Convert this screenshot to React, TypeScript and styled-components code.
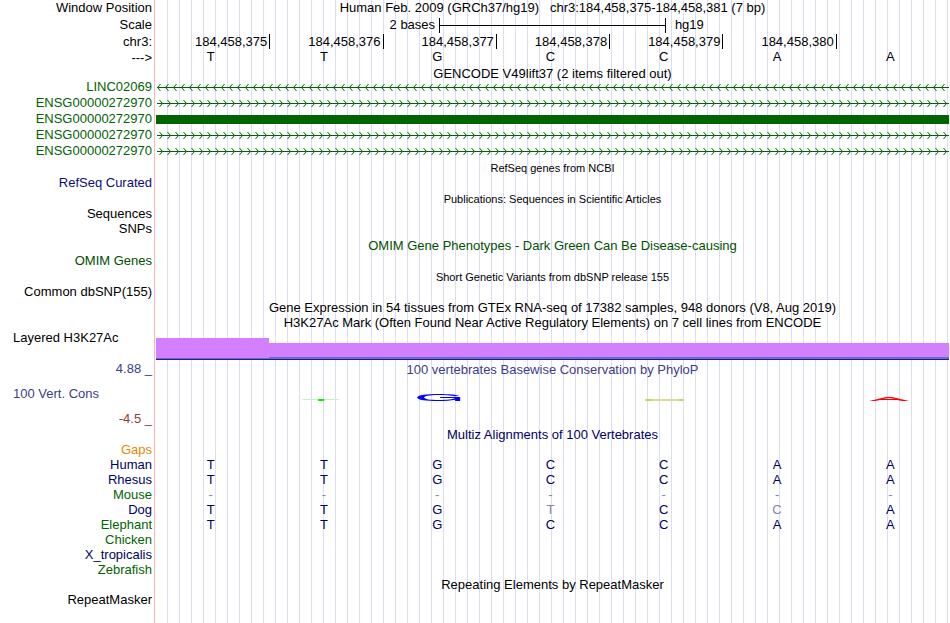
import React from 'react';
import styled, { createGlobalStyle } from 'styled-components';

const LABEL_WIDTH = '156px';

const GlobalStyle = createGlobalStyle`
  body {
    margin: 0;
    background: #fff;
    color: #000;
    font-family: "Liberation Sans", Arial, Helvetica, sans-serif;
    font-size: 13px;
    line-height: 15px;
  }
`;

const Browser = styled.main`
  box-sizing: border-box;
  min-height: 100vh;
  padding-right: 1px;
  overflow: hidden;
  white-space: nowrap;
  background-image: linear-gradient(#ffb4b4, #ffb4b4),
    repeating-linear-gradient(to right, transparent 0 11px, #dcdcf8 11px 12px);
  background-repeat: no-repeat;
  background-size: 1px 100%, 100% 100%;
  background-position: 154px 0, 156px 0;
`;

const Row = styled.div<{ $height: number }>`
  display: grid;
  grid-template-columns: ${LABEL_WIDTH} minmax(0, 1fr);
  height: ${(p) => p.$height}px;
  line-height: ${(p) => p.$height}px;
`;

const Label = styled.div<{ $color?: string; $left?: boolean }>`
  padding: 0 4px 0 13px;
  text-align: ${(p) => (p.$left ? 'left' : 'right')};
  line-height: inherit;
  color: ${(p) => p.$color ?? '#000'};
`;

type Spacing = 'tight' | 'normal' | 'loose';

const titleHeight: Record<Spacing, number> = { tight: 13, normal: 15, loose: 16 };

const Title = styled.h2<{ $color?: string; $small?: boolean; $spacing?: Spacing }>`
  box-sizing: border-box;
  margin: 0 0 0 ${LABEL_WIDTH};
  height: ${(p) => titleHeight[p.$spacing ?? 'normal']}px;
  padding-top: ${(p) => (p.$spacing === 'loose' ? 2 : 0)}px;
  line-height: ${(p) => (p.$spacing === 'loose' ? 14 : 15)}px;
  font-size: ${(p) => (p.$small ? 11 : 13)}px;
  font-weight: 400;
  text-align: center;
  color: ${(p) => p.$color ?? '#000'};
`;

const Heading = styled.h1`
  margin: 0;
  font-size: 13px;
  font-weight: 400;
  line-height: 15px;
  text-align: center;
  white-space: pre;
`;

const ScaleArea = styled.div`
  display: grid;
  grid-template-columns: 1fr 28.6% 1fr;
  align-items: center;
`;

const ScaleUnit = styled.span`
  padding-right: 4px;
  text-align: right;
`;

const Assembly = styled.span`
  padding-left: 9px;
`;

const ScaleBar = styled.div`
  display: flex;
  align-items: center;
  height: 15px;
  border: solid #000;
  border-width: 0 1px;

  &::before {
    content: '';
    flex: 1;
    height: 1px;
    background: #000;
  }
`;

const Columns = styled.div`
  display: grid;
  grid-template-columns: repeat(7, minmax(0, 1fr));
`;

const Position = styled.span<{ $tick: boolean }>`
  height: 15px;
  margin-right: -1px;
  padding-right: 2px;
  text-align: right;
  border-right: 1px solid ${(p) => (p.$tick ? '#000' : 'transparent')};
`;

const Base = styled.span`
  padding-right: 4px;
  line-height: 13px;
  text-align: center;
`;

const Strand = styled.svg`
  display: block;
  width: 100%;
  height: 16px;
`;

const ExonBar = styled.div`
  align-self: center;
  height: 9px;
  background: #006400;
`;

const SignalRow = styled.div`
  display: grid;
  grid-template-columns: ${LABEL_WIDTH} minmax(0, 1fr);
  align-items: end;
  height: 30px;
`;

const SignalLabel = styled(Label)`
  align-self: start;
`;

const Signal = styled.svg`
  display: block;
  width: 100%;
  height: 22px;
`;

const Conservation = styled.section`
  display: grid;
  grid-template-columns: ${LABEL_WIDTH} minmax(0, 1fr);
`;

const ConservationLabels = styled.div`
  display: grid;
  grid-template-rows: 17px 33px 17px;
  align-items: center;
`;

const ConservationTitle = styled.h2`
  margin: 0;
  padding-top: 2px;
  font-size: 13px;
  font-weight: 400;
  line-height: 15px;
  text-align: center;
  color: #3c3c8c;
`;

const Logos = styled(Columns)`
  padding-top: 15px;
`;

const Logo = styled.svg`
  display: block;
  width: 100%;
  height: 16px;
`;

const Alignment = styled.table`
  width: 100%;
  table-layout: fixed;
  border-collapse: collapse;
`;

const Species = styled.th<{ $color: string }>`
  width: 152px;
  height: 15px;
  padding: 0 4px 0 0;
  font-weight: 400;
  text-align: right;
  color: ${(p) => p.$color};
`;

const AlignedBase = styled.td<{ $faded: boolean }>`
  padding: 0 4px 0 0;
  text-align: center;
  color: ${(p) => (p.$faded ? '#8484b0' : '#000064')};
`;

const GREEN = '#006400';
const NAVY = '#000064';

const positions = [
  '184,458,375',
  '184,458,376',
  '184,458,377',
  '184,458,378',
  '184,458,379',
  '184,458,380',
  '',
];

const reference = 'TTGCCAA';

const transcripts: { name: string; kind: 'left' | 'right' | 'exon' }[] = [
  { name: 'LINC02069', kind: 'left' },
  { name: 'ENSG00000272970', kind: 'right' },
  { name: 'ENSG00000272970', kind: 'exon' },
  { name: 'ENSG00000272970', kind: 'right' },
  { name: 'ENSG00000272970', kind: 'right' },
];

const species = [
  { name: 'Gaps', color: '#e68a00', bases: '       ', faded: '' },
  { name: 'Human', color: NAVY, bases: 'TTGCCAA', faded: '' },
  { name: 'Rhesus', color: NAVY, bases: 'TTGCCAA', faded: '' },
  { name: 'Mouse', color: GREEN, bases: '-------', faded: '0123456' },
  { name: 'Dog', color: NAVY, bases: 'TTGTCCA', faded: '35' },
  { name: 'Elephant', color: GREEN, bases: 'TTGCCAA', faded: '' },
  { name: 'Chicken', color: GREEN, bases: '       ', faded: '' },
  { name: 'X_tropicalis', color: NAVY, bases: '       ', faded: '' },
  { name: 'Zebrafish', color: GREEN, bases: '       ', faded: '' },
];

function Intron({ direction, id }: { direction: 'left' | 'right'; id: string }) {
  const chevron = direction === 'left' ? 'M4.5 5L1.5 8.5L4.5 12' : 'M3.5 5L6.5 8.5L3.5 12';
  return (
    <Strand aria-hidden="true">
      <defs>
        <pattern id={id} width="8" height="16" patternUnits="userSpaceOnUse">
          <path d={chevron} fill="none" stroke={GREEN} />
        </pattern>
      </defs>
      <rect x="1" y="8" width="100%" height="1" fill={GREEN} />
      <rect width="100%" height="16" fill={`url(#${id})`} />
    </Strand>
  );
}

function ConservationLogos() {
  return (
    <Logos>
      <Logo />
      <Logo viewBox="0 0 113 16">
        <path d="M33 7.5H70" stroke="#c4f4c4" />
        <path d="M49 8H55" stroke="#00f000" strokeWidth="2" />
      </Logo>
      <Logo viewBox="0 0 113 16">
        <path
          fill="#0000ff"
          fillRule="evenodd"
          d="M34 5.5C34 3 44 2 55 2C66 2 74 2.7 76 4L72 4.3C68 3.3 62 3 55 3C46 3 41 4 41 5.5C41 7.2 47 8 56 8C64 8 70 7.3 72 6H57V5H77V9H72V7.8C68 8.6 62 9 55 9C43 9 34 8 34 5.5Z"
        />
      </Logo>
      <Logo />
      <Logo viewBox="0 0 113 16">
        <path d="M36 8H75" stroke="#dcdc96" strokeWidth="2" />
        <path d="M37 8H43M70 8H74" stroke="#bebe3c" />
      </Logo>
      <Logo />
      <Logo viewBox="0 0 113 16">
        <path
          fill="#ff0000"
          d="M33 9L50 5H56L73 9H66L61 8H44L39 9ZM47 7H59L53 6Z"
          fillRule="evenodd"
        />
      </Logo>
    </Logos>
  );
}

export default function App() {
  return (
    <Browser>
      <GlobalStyle />
      <Row $height={16}>
        <Label>Window Position</Label>
        <Heading>{'Human Feb. 2009 (GRCh37/hg19)   chr3:184,458,375-184,458,381 (7 bp)'}</Heading>
      </Row>
      <Row $height={18}>
        <Label>Scale</Label>
        <ScaleArea>
          <ScaleUnit>2 bases</ScaleUnit>
          <ScaleBar />
          <Assembly>hg19</Assembly>
        </ScaleArea>
      </Row>
      <Row $height={16}>
        <Label>chr3:</Label>
        <Columns>
          {positions.map((position, i) => (
            <Position key={i} $tick={position !== ''}>
              {position}
            </Position>
          ))}
        </Columns>
      </Row>
      <Row $height={16}>
        <Label>---&gt;</Label>
        <Columns>
          {reference.split('').map((base, i) => (
            <Base key={i}>{base}</Base>
          ))}
        </Columns>
      </Row>

      <Title $spacing="tight">GENCODE V49lift37 (2 items filtered out)</Title>
      {transcripts.map(({ name, kind }, i) => (
        <Row key={i} $height={16}>
          <Label $color={GREEN}>{name}</Label>
          {kind === 'exon' ? <ExonBar /> : <Intron direction={kind} id={`intron-${i}`} />}
        </Row>
      ))}

      <Title $small $spacing="loose">RefSeq genes from NCBI</Title>
      <Row $height={15}>
        <Label $color="#0c0c78">RefSeq Curated</Label>
      </Row>

      <Title $small $spacing="loose">Publications: Sequences in Scientific Articles</Title>
      <Row $height={15}>
        <Label>Sequences</Label>
      </Row>
      <Row $height={16}>
        <Label>SNPs</Label>
      </Row>

      <Title $color="#005000" $spacing="loose">OMIM Gene Phenotypes - Dark Green Can Be Disease-causing</Title>
      <Row $height={15}>
        <Label $color="#005000">OMIM Genes</Label>
      </Row>

      <Title $small $spacing="loose">Short Genetic Variants from dbSNP release 155</Title>
      <Row $height={15}>
        <Label>Common dbSNP(155)</Label>
      </Row>

      <Title $spacing="loose">
        Gene Expression in 54 tissues from GTEx RNA-seq of 17382 samples, 948 donors (V8, Aug 2019)
      </Title>
      <Title>H3K27Ac Mark (Often Found Near Active Regulatory Elements) on 7 cell lines from ENCODE</Title>
      <SignalRow>
        <SignalLabel $left>Layered H3K27Ac</SignalLabel>
        <Signal viewBox="0 0 7 22" preserveAspectRatio="none" shapeRendering="crispEdges">
          <path d="M0 0H1V5H7V20H0Z" fill="#d47fff" />
          <path d="M0 20H1V19H7V21H0Z" fill="#6a6ad4" />
          <path d="M0 21H7V22H0Z" fill="#1e1e8c" />
        </Signal>
      </SignalRow>

      <Conservation>
        <ConservationLabels>
          <Label $color="#3c3c8c">4.88 _</Label>
          <Label $color="#3c3c8c" $left>100 Vert. Cons</Label>
          <Label $color="#8c3c3c">-4.5 _</Label>
        </ConservationLabels>
        <div>
          <ConservationTitle>100 vertebrates Basewise Conservation by PhyloP</ConservationTitle>
          <ConservationLogos />
        </div>
      </Conservation>

      <Title $color={NAVY}>Multiz Alignments of 100 Vertebrates</Title>
      <Alignment>
        <tbody>
          {species.map(({ name, color, bases, faded }) => (
            <tr key={name}>
              <Species scope="row" $color={color}>{name}</Species>
              {bases.split('').map((base, i) => (
                <AlignedBase key={i} $faded={faded.includes(String(i))}>
                  {base}
                </AlignedBase>
              ))}
            </tr>
          ))}
        </tbody>
      </Alignment>

      <Title>Repeating Elements by RepeatMasker</Title>
      <Row $height={15}>
        <Label>RepeatMasker</Label>
      </Row>
    </Browser>
  );
}
